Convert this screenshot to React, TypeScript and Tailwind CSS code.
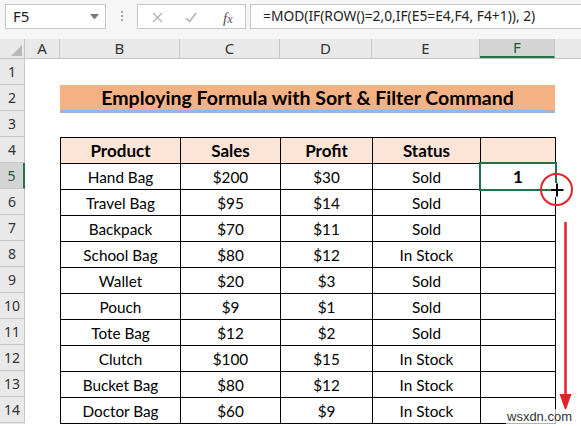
import React from "react";

const products = [
  { name: "Hand Bag", sales: "$200", profit: "$30", status: "Sold" },
  { name: "Travel Bag", sales: "$95", profit: "$14", status: "Sold" },
  { name: "Backpack", sales: "$70", profit: "$11", status: "Sold" },
  { name: "School Bag", sales: "$80", profit: "$12", status: "In Stock" },
  { name: "Wallet", sales: "$20", profit: "$3", status: "Sold" },
  { name: "Pouch", sales: "$9", profit: "$1", status: "Sold" },
  { name: "Tote Bag", sales: "$12", profit: "$2", status: "Sold" },
  { name: "Clutch", sales: "$100", profit: "$15", status: "In Stock" },
  { name: "Bucket Bag", sales: "$80", profit: "$12", status: "In Stock" },
  { name: "Doctor Bag", sales: "$60", profit: "$9", status: "In Stock" },
];

const columns = [
  { key: "A", w: "w-[35px]" },
  { key: "B", w: "w-[120px]" },
  { key: "C", w: "w-[100px]" },
  { key: "D", w: "w-[92px]" },
  { key: "E", w: "w-[108px]" },
  { key: "F", w: "w-[75px]" },
];

const ui = { fontFamily: '"Noto Sans", "Open Sans", sans-serif' };
const cell = { fontFamily: 'Lato, "Liberation Sans", sans-serif' };

function FormulaBar() {
  return (
    <div className="relative h-[39px] bg-[#f6f6f6]" style={ui}>
      {/* name box */}
      <div className="absolute left-[5px] top-[4px] w-[101px] h-[25px] bg-white border border-[#c6c6c6] flex items-center pl-[7px] text-[15px] text-[#222]">
        F5
        <svg className="absolute right-[6px] top-[9px]" width="9" height="6" viewBox="0 0 9 6">
          <path d="M0 0 L9 0 L4.5 5.5 Z" fill="#7a7a7a" />
        </svg>
      </div>
      <div className="absolute left-[121px] top-[11px] flex flex-col gap-[2px]">
        <span className="w-[2px] h-[2px] bg-[#a8a8a8]" />
        <span className="w-[2px] h-[2px] bg-[#a8a8a8]" />
        <span className="w-[2px] h-[2px] bg-[#a8a8a8]" />
      </div>
      {/* cancel / enter / insert function */}
      <div className="absolute left-[137px] top-[4px] w-[109px] h-[25px] bg-white border border-[#c6c6c6]">
        <svg className="absolute left-[14px] top-[7px]" width="11" height="11" viewBox="0 0 11 11">
          <path d="M1 1 L10 10 M10 1 L1 10" stroke="#b3b3b3" strokeWidth="1.4" />
        </svg>
        <svg className="absolute left-[47px] top-[7px]" width="12" height="11" viewBox="0 0 12 11">
          <path d="M1 6 L4.5 9.5 L11 1" stroke="#b3b3b3" strokeWidth="1.6" fill="none" />
        </svg>
        <span
          className="absolute left-[85px] top-[2px] text-[15px] italic text-[#555]"
          style={{ fontFamily: '"Liberation Serif", serif' }}
        >
          f<span className="text-[12px]">x</span>
        </span>
      </div>
      <div className="absolute left-[250px] top-[4px] w-[340px] h-[25px] bg-white border border-[#c6c6c6] flex items-center pl-[12px] text-[13.8px] text-[#222] whitespace-nowrap">
        =MOD(IF(ROW()=2,0,IF(E5=E4,F4, F4+1)), 2)
      </div>
    </div>
  );
}

function ColumnHeaders() {
  return (
    <div className="flex h-[20px] bg-[#e9e9e9] border-b border-[#c6c6c6] text-[15px] text-[#333]" style={ui}>
      <div className="relative w-[25px] shrink-0 border-r border-[#c6c6c6]">
        <svg className="absolute right-[2px] bottom-[2px]" width="11" height="11" viewBox="0 0 11 11">
          <path d="M11 0 L11 11 L0 11 Z" fill="#b8b8b8" />
        </svg>
      </div>
      {columns.map((c) =>
        c.key === "F" ? (
          <div
            key={c.key}
            className={`${c.w} shrink-0 flex items-center justify-center bg-[#d4d4d4] border-r border-[#c6c6c6] border-b-2 border-b-[#217346] text-[#1e5c3a]`}
          >
            {c.key}
          </div>
        ) : (
          <div key={c.key} className={`${c.w} shrink-0 flex items-center justify-center border-r border-[#c6c6c6]`}>
            {c.key}
          </div>
        )
      )}
      <div className="flex-1" />
    </div>
  );
}

function RowHeaders() {
  const nums = Array.from({ length: 14 }, (_, i) => i + 1);
  return (
    <div className="w-[25px] shrink-0 bg-[#e9e9e9] text-[14px] text-[#333]" style={ui}>
      {nums.map((n) =>
        n === 5 ? (
          <div
            key={n}
            className="h-[26px] flex items-center justify-center bg-[#d4d4d4] border-b border-[#c6c6c6] border-r-2 border-r-[#217346] text-[#1e5c3a]"
          >
            {n}
          </div>
        ) : (
          <div key={n} className="h-[26px] flex items-center justify-center border-b border-r border-[#c6c6c6]">
            {n}
          </div>
        )
      )}
    </div>
  );
}

function DataTable() {
  return (
    <div className="w-[496px] border-l border-t border-black text-black" style={cell}>
      <div className="flex h-[26px] bg-[#fce4d6] text-[17px] font-bold">
        <div className="w-[120px] border-r border-b border-black flex items-center justify-center">Product</div>
        <div className="w-[100px] border-r border-b border-black flex items-center justify-center">Sales</div>
        <div className="w-[92px] border-r border-b border-black flex items-center justify-center">Profit</div>
        <div className="w-[108px] border-r border-b border-black flex items-center justify-center">Status</div>
        <div className="w-[75px] border-r border-b border-black" />
      </div>
      {products.map((p, i) => (
        <div key={p.name} className="flex h-[26px] text-[15.3px]">
          <div className="w-[120px] border-r border-b border-black flex items-center justify-center pt-[2px]">{p.name}</div>
          <div className="w-[100px] border-r border-b border-black flex items-center justify-center pt-[2px]">{p.sales}</div>
          <div className="w-[92px] border-r border-b border-black flex items-center justify-center pt-[2px]">{p.profit}</div>
          <div className="w-[108px] border-r border-b border-black flex items-center justify-center pt-[2px]">{p.status}</div>
          <div className="w-[75px] border-r border-b border-black flex items-center justify-center text-[17px] font-bold">
            {i === 0 ? "1" : ""}
          </div>
        </div>
      ))}
    </div>
  );
}

export default function App() {
  return (
    <div className="relative w-[581px] h-[426px] overflow-hidden bg-white">
      <FormulaBar />
      <ColumnHeaders />
      <div className="flex">
        <RowHeaders />
        <div className="pl-[35px]">
          <div className="h-[26px]" />
          <div
            className="w-[495px] h-[28px] bg-[#f4b183] border-b-[3px] border-[#a0b3da] flex items-center justify-center text-[19.5px] font-bold text-black"
            style={cell}
          >
            Employing Formula with Sort &amp; Filter Command
          </div>
          <div className="h-[24px]" />
          <DataTable />
        </div>
      </div>

      {/* active cell outline */}
      <div className="absolute left-[479px] top-[162px] w-[78px] h-[29px] border-2 border-[#217346]" />

      {/* fill handle highlight + cursor */}
      <div className="absolute left-[540px] top-[173px] w-[33px] h-[33px] rounded-full border-2 border-[#e3232a]" />
      <svg className="absolute left-[549px] top-[182px]" width="16" height="16" viewBox="0 0 16 16">
        <path d="M8 1 V15 M1 8 H15" stroke="white" strokeWidth="4" />
        <path d="M8 1.5 V14.5 M1.5 8 H14.5" stroke="black" strokeWidth="2" />
      </svg>

      {/* drag direction */}
      <svg className="absolute left-[558px] top-[220px]" width="16" height="194" viewBox="0 0 16 194">
        <path d="M7.5 2 V176" stroke="#e3232a" strokeWidth="2.5" />
        <path d="M1.5 174 L13.5 174 L7.5 191 Z" fill="#e3232a" />
      </svg>

      <div
        className="absolute left-[506px] top-[409px] text-[13px] text-[#333] bg-white/70 px-[1px] leading-[16px]"
        style={{ fontFamily: '"Liberation Sans", sans-serif' }}
      >
        wsxdn.com
      </div>
    </div>
  );
}
